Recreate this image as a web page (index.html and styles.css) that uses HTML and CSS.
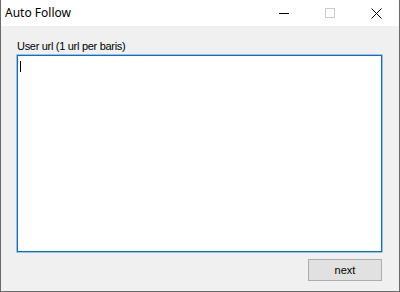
FILE: index.html
```html
<!DOCTYPE html>
<html>
<head>
    <title>Auto Follow</title>
    <link rel="stylesheet" href="styles.css">
</head>
<body>
    <div class="window">
        <div class="titlebar">
            <span class="title">Auto Follow</span>
            <div class="controls">
                <span class="ctrl">
                    <svg width="10" height="10" viewBox="0 0 10 10"><path d="M0 5.5H10" stroke="#000" stroke-width="1"/></svg>
                </span>
                <span class="ctrl">
                    <svg width="10" height="10" viewBox="0 0 10 10"><rect x="0.5" y="0.5" width="9" height="9" fill="none" stroke="#cccccc" stroke-width="1"/></svg>
                </span>
                <span class="ctrl">
                    <svg width="11" height="11" viewBox="0 0 11 11"><path d="M0.5 0.5L10.5 10.5M10.5 0.5L0.5 10.5" stroke="#000" stroke-width="1"/></svg>
                </span>
            </div>
        </div>
        <div class="content">
            <label class="field-label">User url (1 url per baris)</label>
            <div class="textbox"><span class="caret"></span></div>
            <div class="button-row">
                <button class="btn">next</button>
            </div>
        </div>
    </div>
</body>
</html>
```

FILE: styles.css
```css
html, body {
    margin: 0;
    padding: 0;
}

body {
    width: 400px;
    height: 292px;
    overflow: hidden;
    font-family: "Liberation Sans", Arial, sans-serif;
}

.window {
    box-sizing: border-box;
    width: 400px;
    height: 292px;
    border: 1px solid #6b6b6b;
    border-top: none;
    background-color: #f0f0f0;
    display: flex;
    flex-direction: column;
}

.titlebar {
    height: 26px;
    background-color: #ffffff;
    display: flex;
    align-items: center;
    justify-content: space-between;
}

.title {
    font-family: "Segoe UI", "Noto Sans", sans-serif;
    font-size: 12px;
    color: #000;
    padding-left: 4px;
    margin-top: -1px;
}

.controls {
    display: flex;
    height: 100%;
}

.ctrl {
    width: 46px;
    display: flex;
    align-items: center;
    justify-content: center;
}

.ctrl svg {
    display: block;
}

.content {
    flex: 1;
    padding: 14px 17px 0 16px;
    display: flex;
    flex-direction: column;
}

.field-label {
    font-size: 11px;
    letter-spacing: -0.3px;
    color: #000;
    line-height: 13px;
    height: 15px;
}

.textbox {
    box-sizing: border-box;
    height: 197px;
    background-color: #ffffff;
    border: 1px solid #0a6fd0;
    box-shadow: 0 0 0 0.5px #3a8fe0;
    padding: 5px 0 0 2px;
}

.caret {
    display: block;
    width: 1px;
    height: 11px;
    background-color: #000;
}

.button-row {
    display: flex;
    justify-content: flex-end;
    margin-top: 7px;
}

.btn {
    box-sizing: border-box;
    width: 74px;
    height: 22px;
    background-color: #e1e1e1;
    border: 1px solid #adadad;
    border-radius: 0;
    font-family: "Liberation Sans", Arial, sans-serif;
    font-size: 11px;
    color: #000;
    padding: 0;
}
```
